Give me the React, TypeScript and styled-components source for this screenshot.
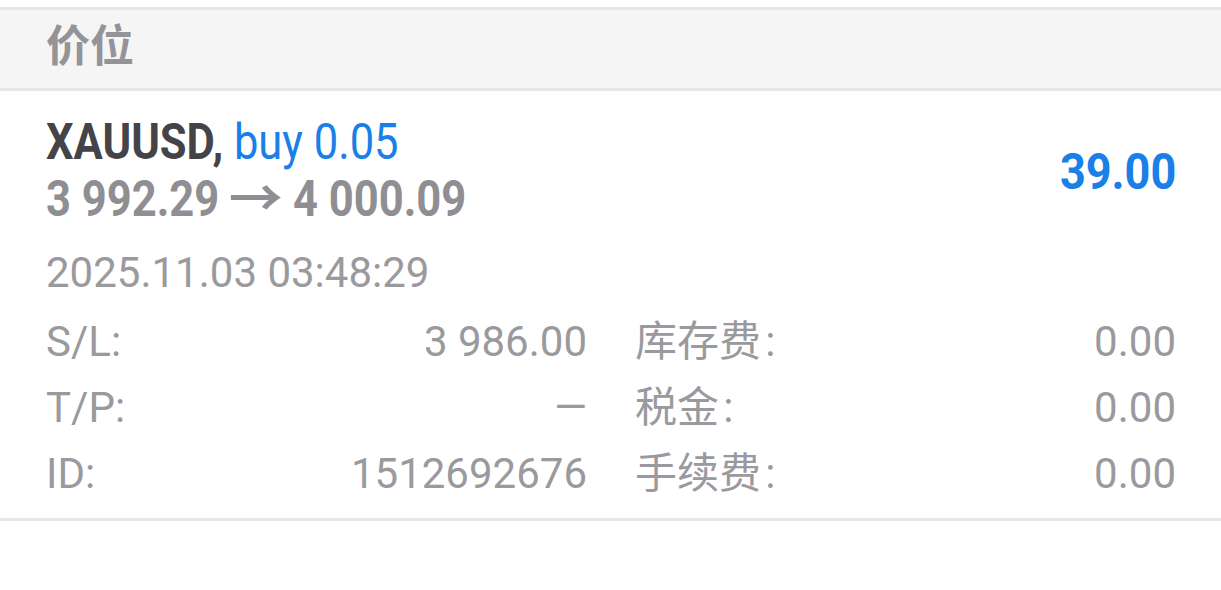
import React from 'react';
import styled, { createGlobalStyle } from 'styled-components';

const GlobalStyle = createGlobalStyle`
  body {
    margin: 0;
    background: #ffffff;
    font-family: Roboto, "Noto Sans CJK SC", sans-serif;
  }
`;

const Page = styled.div`
  padding-top: 7px;
  width: 1221px;
`;

const SectionHeader = styled.div`
  display: flex;
  align-items: center;
  height: 78px;
  padding: 0 46px;
  background: #f5f5f5;
  border-top: 3px solid #e6e6e6;
  border-bottom: 3px solid #e6e6e6;
`;

const HeaderTitle = styled.span`
  font-family: "Noto Sans CJK SC", sans-serif;
  font-size: 44px;
  font-weight: 700;
  color: #949498;
  margin-top: -12px;
`;

const Position = styled.div`
  padding: 23px 45px 11px 46px;
  border-bottom: 3px solid #e6e6e6;
`;

const Summary = styled.div`
  display: flex;
  justify-content: space-between;
  align-items: center;
`;

const Lines = styled.div`
  display: flex;
  flex-direction: column;
`;

const Line = styled.div`
  font-size: 50px;
  line-height: 57px;
  white-space: nowrap;
`;

// the app uses a condensed face; squeeze Roboto to match
const Condensed = styled.span<{ $origin?: string; $ratio?: number }>`
  display: inline-block;
  transform: scaleX(${(p) => p.$ratio ?? 0.87});
  transform-origin: ${(p) => p.$origin ?? 'left'};
`;

const Symbol = styled.span`
  font-weight: 700;
  color: #444448;
`;

const Side = styled.span`
  font-weight: 400;
  color: #1a7fe6;
`;

const Prices = styled.span`
  font-weight: 700;
  color: #8e8e93;
`;

const Arrow = styled.span`
  display: inline-block;
  transform: scaleX(1.24);
  margin: 0 5px;
`;

const Profit = styled.div`
  font-size: 50px;
  font-weight: 700;
  color: #1a7fe6;
  margin-top: 2px;
`;

const OpenTime = styled.div`
  font-size: 42px;
  line-height: 66px;
  color: #9a9a9e;
  margin-top: 12px;
`;

const Details = styled.div`
  display: grid;
  grid-template-columns: 1fr 1fr;
  column-gap: 48px;
  margin-top: 3px;
`;

const Field = styled.div`
  display: flex;
  justify-content: space-between;
  font-size: 42px;
  line-height: 66px;
  color: #9a9a9e;
`;

const Label = styled.span``;

const Value = styled.span``;

const fields: [string, string][] = [
  ['S/L:', '3 986.00'],
  ['库存费\u200a:', '0.00'],
  ['T/P:', '—'],
  ['税金\u200a:', '0.00'],
  ['ID:', '1512692676'],
  ['手续费\u200a:', '0.00'],
];

const App: React.FC = () => {
  return (
    <Page>
      <GlobalStyle />
      <SectionHeader>
        <HeaderTitle>价位</HeaderTitle>
      </SectionHeader>
      <Position>
        <Summary>
          <Lines>
            <Line>
              <Condensed>
                <Symbol>XAUUSD,</Symbol> <Side>buy 0.05</Side>
              </Condensed>
            </Line>
            <Line>
              <Condensed>
                <Prices>
                  3 992.29 <Arrow>→</Arrow> 4 000.09
                </Prices>
              </Condensed>
            </Line>
          </Lines>
          <Profit>
            <Condensed $origin="right" $ratio={0.9}>39.00</Condensed>
          </Profit>
        </Summary>
        <OpenTime>2025.11.03 03:48:29</OpenTime>
        <Details>
          {fields.map(([label, value]) => (
            <Field key={label}>
              <Label>{label}</Label>
              <Value>{value}</Value>
            </Field>
          ))}
        </Details>
      </Position>
    </Page>
  );
};

export default App;
